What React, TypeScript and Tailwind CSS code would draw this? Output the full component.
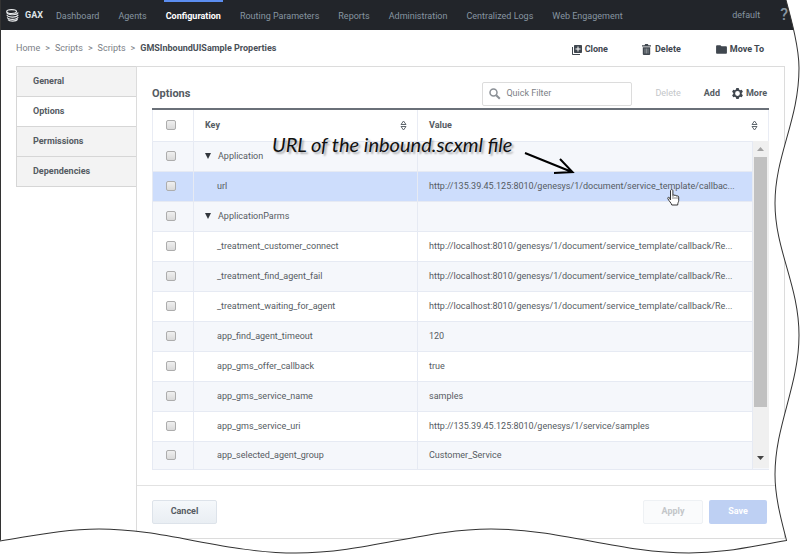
import { MdLibraryAdd, MdFolder } from 'react-icons/md';

const navItems = ['Dashboard', 'Agents', 'Configuration', 'Routing Parameters', 'Reports', 'Administration', 'Centralized Logs', 'Web Engagement'];

const tabs = ['General', 'Options', 'Permissions', 'Dependencies'];

type Row = { key: string; value?: string; group?: boolean; selected?: boolean };

const rows: Row[] = [
  { key: 'Application', group: true },
  { key: 'url', value: 'http://135.39.45.125:8010/genesys/1/document/service_template/callbac...', selected: true },
  { key: 'ApplicationParms', group: true },
  { key: '_treatment_customer_connect', value: 'http://localhost:8010/genesys/1/document/service_template/callback/Re...' },
  { key: '_treatment_find_agent_fail', value: 'http://localhost:8010/genesys/1/document/service_template/callback/Re...' },
  { key: '_treatment_waiting_for_agent', value: 'http://localhost:8010/genesys/1/document/service_template/callback/Re...' },
  { key: 'app_find_agent_timeout', value: '120' },
  { key: 'app_gms_offer_callback', value: 'true' },
  { key: 'app_gms_service_name', value: 'samples' },
  { key: 'app_gms_service_uri', value: 'http://135.39.45.125:8010/genesys/1/service/samples' },
  { key: 'app_selected_agent_group', value: 'Customer_Service' },
];

function Logo() {
  return (
    <svg width="13" height="13" viewBox="0 0 13 13" fill="none" stroke="#e8eaec" strokeWidth="1.2">
      <ellipse cx="5.600" cy="2.6" rx="4.9" ry="1.9" />
      <path d="M.8 3.200c-.2 3 10 3.600 11.400.4M1 5.800c.2 2.800 9.800 3.200 11.200 0M1.300 8.400c.6 2.500 9.400 2.800 10.900-.2M2 10.600c1.400 2 8 2.100 9.700-.2" />
    </svg>
  );
}

function TrashIcon() {
  return (
    <svg width="9" height="11" viewBox="0 0 9 11" fill="#40474f">
      <path d="M0 1.200h2.500L3.200 0h2.600l.7 1.200H9v1.300H0z" />
      <path d="M.8 3.200h7.400V10a1 1 0 0 1-1 1H1.800a1 1 0 0 1-1-1z" />
      <path d="M3 4.500v5M4.500 4.500v5M6 4.500v5" stroke="#a5a9ad" strokeWidth=".7" />
    </svg>
  );
}

function GearIcon() {
  return (
    <svg width="11" height="11" viewBox="0 0 11 11">
      <path
        fill="#40474f"
        fillRule="evenodd"
        d="M4.300 0h2.400l.4 1.600 1 .6 1.600-.5 1.200 2.100-1.200 1.100v1.200l1.200 1.100-1.200 2.100-1.600-.5-1 .6-.4 1.600H4.300l-.4-1.600-1-.6-1.600.5L.1 7.200l1.200-1.100V4.900L.1 3.800l1.200-2.100 1.600.5 1-.6zM5.500 3.100a2.400 2.400 0 1 0 0 4.800 2.400 2.400 0 0 0 0-4.800z"
      />
    </svg>
  );
}

function SortIcon() {
  return (
    <svg width="7" height="11" viewBox="0 0 7 11" fill="none" stroke="#5f666d" strokeWidth="1">
      <path d="M3.500 1 6 4.500H1zM3.500 10 6 6.500H1z" />
    </svg>
  );
}

function Checkbox({ label }: { label: string }) {
  return (
    <input
      type="checkbox"
      aria-label={label}
      className="block mx-auto w-[10px] h-[10px] appearance-none rounded-xs border border-[#adadad] bg-linear-to-b from-[#efefef] to-[#dadada]"
    />
  );
}

function Scrollbar() {
  return (
    <div className="flex flex-col items-center h-[327px] bg-[#f0f0f0]">
      <svg className="my-[6px]" width="7" height="4" viewBox="0 0 7 4">
        <path d="M0 4 3.500 0 7 4z" fill="#a3a3a3" />
      </svg>
      <div className="w-[13px] h-[250px] bg-[#c1c1c1]" />
      <svg className="mt-auto mb-2" width="7" height="4" viewBox="0 0 7 4">
        <path d="M0 0 3.500 4 7 0z" fill="#444" />
      </svg>
    </div>
  );
}

function OptionsTable() {
  return (
    <table className="w-full table-fixed border-collapse text-left">
      <colgroup>
        <col className="w-[41px]" />
        <col className="w-[224px]" />
        <col />
        <col className="w-[16px]" />
      </colgroup>
      <thead>
        <tr className="h-8 border-t-2 border-[#6a7078]">
          <th className="pr-[5px] border-x border-[#e9ecf4]">
            <Checkbox label="Select all" />
          </th>
          <th className="pl-[11px] pr-[10px] border-r border-[#e9ecf4]">
            <div className="flex items-center justify-between">
              Key <SortIcon />
            </div>
          </th>
          <th colSpan={2} className="pl-[11px] pr-[10px] border-r border-[#e9ecf4]">
            <div className="flex items-center justify-between">
              Value <SortIcon />
            </div>
          </th>
        </tr>
      </thead>
      <tbody>
        {rows.map((row, i) => (
          <tr key={row.key} className={`h-[30px] last:h-7 ${row.selected ? 'bg-[#cdddfc]' : i % 2 === 0 ? 'bg-[#f5f7fb]' : 'bg-white'}`}>
            <td className="border border-[#e6eaf3] pr-[5px]">
              <Checkbox label={row.key} />
            </td>
            <td className="border border-[#e6eaf3] pl-[11px]">
              {row.group ? (
                <div className="flex items-center gap-[7px]">
                  <svg width="6" height="6" viewBox="0 0 6 6">
                    <path d="M0 0h6L3 6z" fill="#33383e" />
                  </svg>
                  {row.key}
                </div>
              ) : (
                <div className="pl-3">{row.key}</div>
              )}
            </td>
            <td className="border border-[#e6eaf3] pl-[11px] whitespace-nowrap">{row.value}</td>
            {i === 0 && (
              <td rowSpan={rows.length} className="border-b border-[#e6eaf3] align-top">
                <Scrollbar />
              </td>
            )}
          </tr>
        ))}
      </tbody>
    </table>
  );
}

// Handwritten callout, its arrow and the hand pointer
function Callout() {
  return (
    <>
      <p className="absolute left-[272px] top-[132px] text-[20px] leading-6 italic text-[#111] whitespace-nowrap font-['Segoe_Print','Lato',cursive] text-shadow-[2px_2px_2px_rgba(0,0,0,0.3)]">
        URL of the inbound.scxml file
      </p>
      <svg className="absolute left-[524px] top-[151px]" width="51" height="24" viewBox="0 0 51 24" fill="none" stroke="#000" strokeWidth="2">
        <path d="M1 2 48 21M36 8l12.500 13L30 22" />
      </svg>
      <svg className="absolute left-[667px] top-[189px]" width="13" height="17" viewBox="0 0 13 17">
        <path
          d="M3.500 11V2c0-2 2.400-2 2.400 0v4.500c.3-1 2-.9 2 .3.300-.9 1.900-.7 1.900.5.600-.7 1.900-.4 1.900.8v3.400c0 1.500-1 2.200-1 4.500H4.800C4.300 13.800 1.800 12 .8 9.600c-.4-1.300 1-1.700 1.700-.9z"
          fill="#fff"
          stroke="#333"
        />
        <path d="M6 7v3M8 8v2M10 8v2" stroke="#555" strokeWidth=".7" />
      </svg>
    </>
  );
}

// Torn paper edge along the right and bottom
function TornEdge() {
  return (
    <svg className="absolute inset-0 w-full h-full pointer-events-none" viewBox="0 0 800 554" preserveAspectRatio="none">
      <path
        fill="#fff"
        d="M786 0C792 22 799 48 799 68C799 120 775 155 775 203C775 250 799 285 799 335C799 385 775 425 775 474C775 498 782 522 786.500 540C750 546 725 552.500 689 552.500C620 552.500 560 528.500 491 528.500C425 528.500 365 552.500 296 552.500C225 552.500 165 528.500 99 528.500C62 528.500 30 536 0 540.500V554H800V0Z"
      />
      <path
        fill="none"
        stroke="#333"
        d="M786 0C792 22 799 48 799 68C799 120 775 155 775 203C775 250 799 285 799 335C799 385 775 425 775 474C775 498 782 522 786.500 540C750 546 725 552.500 689 552.500C620 552.500 560 528.500 491 528.500C425 528.500 365 552.500 296 552.500C225 552.500 165 528.500 99 528.500C62 528.500 30 536 0 540.500"
      />
      <path d="M.5 0V540" stroke="#333" />
    </svg>
  );
}

export default function App() {
  return (
    <div className="relative overflow-hidden bg-white pb-4 font-[Roboto,sans-serif] text-[9px] leading-[13px] text-[#555b62]">
      <header className="flex items-center h-[30px] pl-[6px] pr-3 bg-[#22252a] text-[#8795a1]">
        <a href="#" className="flex items-center gap-[6px] mr-[11px] font-bold text-[#dfe3e6]">
          <Logo /> GAX
        </a>
        <nav className="flex h-full gap-[15px]">
          {navItems.map((item) => (
            <a
              key={item}
              href="#"
              className={`flex items-center px-[2px] whitespace-nowrap border-t-2 ${item === 'Configuration' ? 'border-[#5b8def] font-bold text-white' : 'border-transparent'}`}
            >
              {item}
            </a>
          ))}
        </nav>
        <a href="#" className="ml-auto">default</a>
        <button className="ml-5 text-base font-medium">?</button>
      </header>

      <div className="flex items-center justify-between h-[36px] pl-4 pr-9">
        <nav className="flex gap-[5px] text-[#7b8086]">
          <a href="#">Home</a>
          <span>&gt;</span>
          <a href="#">Scripts</a>
          <span>&gt;</span>
          <a href="#">Scripts</a>
          <span>&gt;</span>
          <span className="font-bold text-[#4a5057]">GMSInboundUISample Properties</span>
        </nav>
        <div className="flex gap-[34px] pt-[3px] font-bold text-[#40474f]">
          <button className="flex items-center gap-[2px]">
            <MdLibraryAdd size={12} /> Clone
          </button>
          <button className="flex items-center gap-1">
            <TrashIcon /> Delete
          </button>
          <button className="flex items-center gap-[2px]">
            <MdFolder size={13} /> Move To
          </button>
        </div>
      </div>

      <div className="flex ml-4 mr-[15px]">
        <aside className="w-[120px]">
          {tabs.map((tab) => (
            <a
              key={tab}
              href="#"
              className={`flex items-center pl-4 border-l border-[#d6d6d6] font-bold ${tab === 'Options' ? 'h-[30px]' : 'h-[31px] -mb-px border-y bg-[#f3f3f3]'}`}
            >
              {tab}
            </a>
          ))}
        </aside>

        <main className="flex-1 min-w-0 border border-[#dcdcdc]">
          <section className="px-[15px] pb-[15px]">
            <div className="flex items-center h-[41px] pt-3">
              <h1 className="text-[11px] font-bold">Options</h1>
              <label className="flex items-center gap-[5px] ml-auto w-[150px] h-6 px-[6px] border border-[#dcdcdc] rounded-xs">
                <svg className="shrink-0" width="12" height="12" viewBox="0 0 12 12" fill="none" stroke="#8b9096" strokeWidth="1.500">
                  <circle cx="4.500" cy="4.500" r="3.500" />
                  <path d="m7.200 7.200 3.600 3.600" strokeWidth="2" />
                </svg>
                <input aria-label="Quick Filter" placeholder="Quick Filter" className="w-full min-w-0 outline-none placeholder:text-[#7b8086]" />
              </label>
              <button disabled className="ml-[23px] text-[#c3c6c9]">Delete</button>
              <button className="ml-[23px] font-bold">Add</button>
              <button className="flex items-center gap-[3px] ml-3 font-bold mr-[2px]">
                <GearIcon /> More
              </button>
            </div>
            <OptionsTable />
          </section>
          <footer className="flex items-center gap-[6px] h-[53px] px-[15px] border-t border-[#e2e2e2] font-bold">
            <button className="w-[65px] h-6 rounded-xs border border-[#dde3ea] bg-linear-to-b from-[#f5f8fb] to-[#e9eef3]">Cancel</button>
            <button disabled className="ml-auto w-[60px] h-6 rounded-xs border border-[#eef1f4] bg-[#fafbfc] text-[#c3c6c9]">Apply</button>
            <button disabled className="w-[58px] h-6 mr-[2px] rounded-xs bg-[#bed0f3] text-white">Save</button>
          </footer>
        </main>
      </div>

      <Callout />
      <TornEdge />
    </div>
  );
}
